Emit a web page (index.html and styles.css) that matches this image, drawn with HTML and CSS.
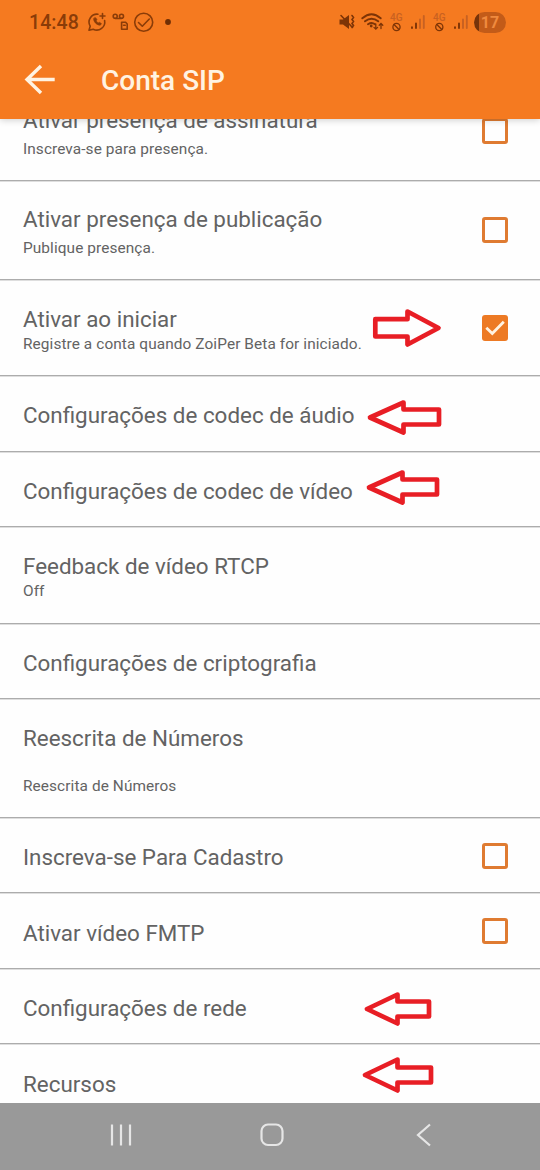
FILE: index.html
```html
<!DOCTYPE html>
<html lang="pt">
<head>
<meta charset="utf-8">
<title>Conta SIP</title>
<link rel="stylesheet" href="styles.css">
</head>
<body>
<div class="screen">
  <header class="header">
    <div class="status">
      <span class="clock">14:48</span>
      <svg class="status-left" width="90" height="24" viewBox="85 10 90 24" fill="none" stroke="#8a3c08" stroke-width="1.6" stroke-linecap="round" stroke-linejoin="round">
        <path d="M98 14.200A8 8 0 0 0 90.200 26.200L89 30.200L93.200 29.200A8 8 0 0 0 104.600 20.500M102.500 13.500v5M100 16h5"/>
        <path d="M93.800 18.200c-1.300 2.700 3.600 8 6.800 6.800l.8-1.500-2.200-1.300-1 .8c-1-.5-1.700-1.300-2-2.300l.8-.9-1.100-1.900z" fill="#8a3c08" stroke-width=".6"/>
        <circle cx="115.200" cy="16.300" r="2"/><circle cx="121.500" cy="16.300" r="2"/><path d="M115.200 18.500h6.300M121.600 22.300h4l1.600 1.700v5.300h-5.600zM123.600 25.300h1.600"/>
        <circle cx="143.700" cy="22.300" r="9"/><path d="M138.500 22.500l3.800 3.700 7-7.200"/>
        <circle cx="168" cy="22" r="2.900" fill="#6f2e04" stroke="none"/>
      </svg>
      <svg class="status-right" width="133" height="24" viewBox="338 10 133 24" fill="none" stroke="#7d3406" stroke-linecap="round">
        <path d="M339.500 19.500h3.500l6-4.500v14l-6-4.500h-3.500z" fill="#7d3406" stroke="none"/>
        <path d="M341 15.500l11.500 12M352 15.500l1.500 2-1.500 2 1.500 2-1.500 2 1.500 2-1.500 2" stroke-width="1.600"/>
        <path d="M362.300 18.300q9.200-8 18.400 0M365 21.300q6.600-5.300 13.200 0M368 24.300q3.700-2.600 7 0" stroke-width="1.900"/>
        <circle cx="371.200" cy="26" r="1.400" fill="#7d3406" stroke="none"/>
        <path d="M375.800 24v5M374 27.400l1.800 1.800 1.800-1.800M381 28.500v-5M379.200 25.200l1.800-1.800 1.800 1.800" stroke-width="1.300"/>
        <g stroke-width="1.300"><circle cx="396.500" cy="27" r="3.600"/><path d="M394 24.500l5 5"/><circle cx="439.300" cy="27" r="3.600"/><path d="M436.800 24.500l5 5"/></g>
        <g stroke-width="1.900"><path d="M412 27.300v.8M416 23.500v4.600M455 27.300v.8M459 23.500v4.600"/><path d="M420 19.500v8.600M423.800 16v12.100M463 19.500v8.600M466.800 16v12.100" stroke="#c76122"/></g>
        <g class="network"><text x="390" y="20.800">4G</text><text x="433" y="20.800">4G</text></g>
      </svg>
      <span class="battery">17</span>
    </div>
    <div class="toolbar">
      <svg width="32" height="32" viewBox="24 64 32 32" fill="none" stroke="#fff3e2" stroke-width="3.400"><path d="M54.700 79.500H27.500M41 66L27 79.500L41 93"/></svg>
      <h1>Conta SIP</h1>
    </div>
  </header>
  <main class="list">
    <section class="row first spaced"><div><h2>Ativar presença de assinatura</h2><p>Inscreva-se para presença.</p></div><i class="check"></i></section>
    <section class="row tall spaced"><div><h2>Ativar presença de publicação</h2><p>Publique presença.</p></div><i class="check"></i></section>
    <section class="row double"><div><h2>Ativar ao iniciar</h2><p>Registre a conta quando ZoiPer Beta for iniciado.</p></div>
      <i class="check on"><svg width="26" height="26" viewBox="0 0 26 26" fill="none" stroke="#fff3e2" stroke-width="2.800"><path d="M4.300 12.700l6 5.800L21.800 6.800"/></svg></i></section>
    <section class="row"><h2>Configurações de codec de áudio</h2></section>
    <section class="row"><h2>Configurações de codec de vídeo</h2></section>
    <section class="row double"><div><h2>Feedback de vídeo RTCP</h2><p>Off</p></div></section>
    <section class="row"><h2>Configurações de criptografia</h2></section>
    <section class="row rewrite"><div><h2>Reescrita de Números</h2><p>Reescrita de Números</p></div></section>
    <section class="row"><h2>Inscreva-se Para Cadastro</h2><i class="check"></i></section>
    <section class="row"><h2>Ativar vídeo FMTP</h2><i class="check"></i></section>
    <section class="row"><h2>Configurações de rede</h2></section>
    <section class="row last"><h2>Recursos</h2></section>
  </main>
  <nav class="nav">
    <svg width="540" height="67" viewBox="0 1103 540 67" fill="none" stroke="#e6e6e6" stroke-width="2.200"><path d="M112 1124.500v21M121 1124.500v21M130 1124.500v21"/><rect x="261.500" y="1124.500" width="21" height="20.500" rx="6.500"/><path d="M430 1124.500L418 1135l12 10.500"/></svg>
  </nav>
  <svg class="marks" width="540" height="1170" viewBox="0 0 540 1170" fill="none" stroke="#e81e25" stroke-width="4.700" stroke-linejoin="round">
    <path d="M375.300 319.200H407.500V311.500L438.500 328L407.500 344.500V336.500H375.300Z"/>
    <path d="M439 409.500H403.500V402.500L370 417.500L403.500 432.500V424.500H439Z"/>
    <path d="M437 479.500H402.500V472.500L369 487.500L402.500 502.500V494.500H437Z"/>
    <path d="M429 1001.500H397.500V994.500L367 1009L397.500 1023.500V1016.500H429Z"/>
    <path d="M431 1067.500H397.500V1059.500L365 1075L397.500 1090.500V1082.500H431Z"/>
  </svg>
</div>
</body>
</html>
```
FILE: styles.css
```css
* { box-sizing: border-box; }
body { margin: 0; font-family: Roboto, sans-serif; }
h1, h2, p { margin: 0; font-weight: 400; white-space: nowrap; }
svg { display: block; flex: none; }
.screen { position: relative; width: 540px; height: 1170px; display: flex; flex-direction: column; overflow: hidden; background: #fefefe; }
.header { position: relative; z-index: 1; flex: none; height: 119px; background: #f57a20; box-shadow: 0 1px 7px rgba(0, 0, 0, .2); }
.status { display: flex; align-items: center; height: 44px; padding: 0 34px 0 29px; }
.clock { width: 56px; font-size: 19.500px; font-weight: 500; color: #8a3c08; letter-spacing: .1px; }
.status-right { margin-left: auto; }
.network text { font: 500 10px Roboto, sans-serif; fill: #c96120; stroke: none; }
.battery { width: 32px; height: 21px; margin-left: 3px; border-radius: 11px; background: linear-gradient(90deg, #76330a 5px, #c35b18 5px); color: #f08a3e; font-size: 16px; font-weight: 700; line-height: 21px; text-align: center; }
.toolbar { display: flex; align-items: center; height: 72px; padding-left: 24px; gap: 45px; }
.toolbar h1 { font-size: 28px; font-weight: 500; color: #fff3e2; line-height: 36px; padding-top: 2px; }
.list { flex: none; height: 984px; }
.row { display: flex; align-items: center; justify-content: space-between; height: 75.300px; padding: 5px 32px 0 23px; border-bottom: 1px solid #acacac; box-shadow: 0 1px #dedede; color: #636363; }
.row h2 { font-size: 22.400px; line-height: 27px; }
.row p { font-size: 15.400px; line-height: 23px; letter-spacing: .09px; }
.double { height: 96.800px; padding-top: 7px; }
.tall { height: 99px; }
.spaced { padding-top: 7px; }
.spaced p { padding-top: 4px; }
.first { height: 99px; margin-top: -37.500px; }
.rewrite { height: 119.200px; padding-top: 7px; }
.rewrite p { padding-top: 23px; }
.last { height: 59px; padding-top: 21px; border: 0; box-shadow: none; }
.check { flex: none; width: 26px; height: 26px; margin-bottom: 4px; border: 3px solid #df7b31; border-radius: 3px; }
.spaced .check, .double .check { margin-bottom: 6px; }
.check.on { border: 0; background: #ed7a24; }
.nav { position: relative; flex: none; height: 67px; background: #999; }
.marks { position: absolute; inset: 0; z-index: 2; }
```
